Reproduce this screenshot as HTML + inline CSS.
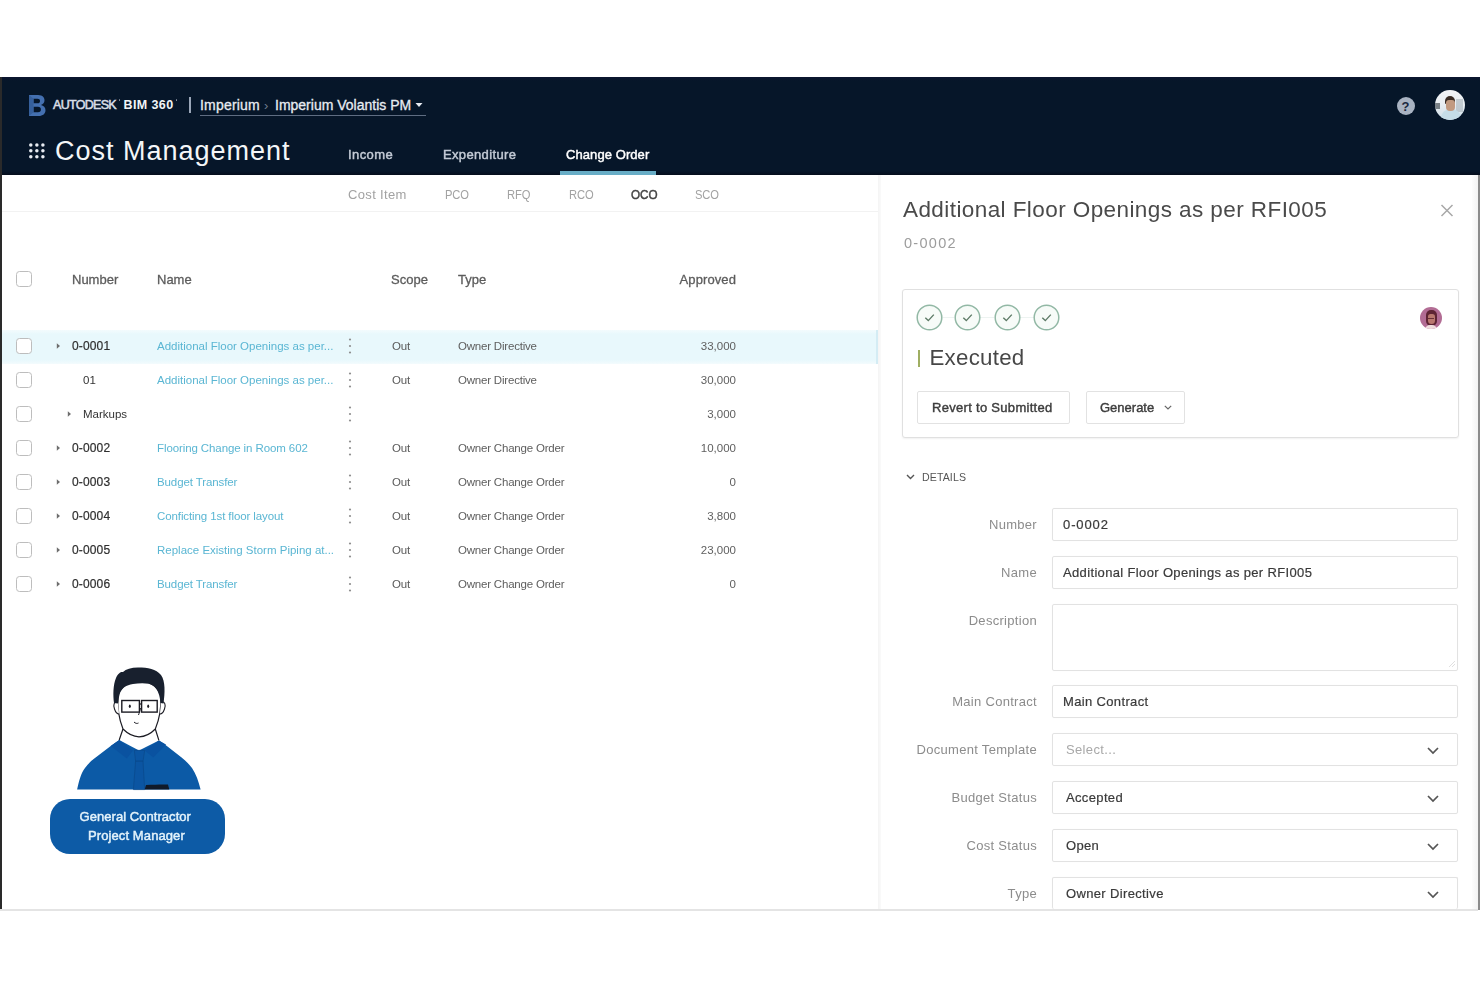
<!DOCTYPE html><html><head><meta charset="utf-8"><style>
*{box-sizing:border-box;margin:0;padding:0}
html,body{width:1480px;height:987px;overflow:hidden;background:#fff;font-family:"Liberation Sans",sans-serif}
.a{position:absolute;white-space:nowrap}
.b{position:absolute}
#wrap{position:absolute;left:0;top:0;width:1480px;height:987px;filter:blur(0.3px)}
</style></head><body><div id="wrap"><div class="b" style="left:0;top:77px;width:1480px;height:98px;background:linear-gradient(180deg,#0c1530 0%,#061629 4%,#061629 96%,#050d1c 100%)"></div>
<div class="b" style="left:0;top:77px;width:2px;height:833px;background:#2a2a2a"></div>
<div class="b" style="left:1472px;top:175px;width:6px;height:734px;background:linear-gradient(90deg,#fdfdfd,#f3f3f3)"></div>
<div class="b" style="left:1478px;top:175px;width:2px;height:735px;background:#8c8c8c"></div>
<div class="b" style="left:0;top:909px;width:1478px;height:2px;background:#e4e4e4"></div>
<svg class="b" style="left:28px;top:94px" width="18" height="23" viewBox="0 0 18 23">
<path d="M1 1 H10 C15 1 16.5 4 16.5 6.2 C16.5 8.6 15 10.3 13 11 C15.6 11.6 17.5 13.5 17.5 16.2 C17.5 19.6 15 22 10.5 22 H1 Z M5.5 4.8 V9.3 H9.5 C11.2 9.3 12 8.4 12 7 C12 5.6 11.2 4.8 9.5 4.8 Z M5.5 12.8 V18.2 H10 C12 18.2 12.9 17.2 12.9 15.5 C12.9 13.8 12 12.8 10 12.8 Z" fill="#4470b0" fill-rule="evenodd"/>
<path d="M1 1 L5.5 4.8 V18.2 L1 22 Z" fill="#36609c"/>
</svg>
<div class="a" style="left:53px;top:98.92px;font-size:12.5px;line-height:12.5px;color:#d7dde6;letter-spacing:-0.7px;-webkit-text-stroke:0.55px #d7dde6;">AUTODESK</div>
<div class="b" style="left:118.5px;top:99px;width:1.6px;height:1.6px;border-radius:1px;background:#8890a0"></div>
<div class="a" style="left:123.5px;top:98.92px;font-size:12.5px;line-height:12.5px;color:#f2f4f7;font-weight:bold;letter-spacing:0.4px;">BIM 360</div>
<div class="b" style="left:175.5px;top:99px;width:1.6px;height:1.6px;border-radius:1px;background:#8890a0"></div>
<div class="b" style="left:189px;top:97px;width:1.5px;height:16px;background:#9aa6b8"></div>
<div class="a" style="left:200px;top:98.15px;font-size:14px;line-height:14px;color:#e8ecf2;letter-spacing:0.2px;-webkit-text-stroke:0.3px #e8ecf2;">Imperium</div>
<div class="a" style="left:264px;top:98.99px;font-size:13px;line-height:13px;color:#6f7c8e;">&#8250;</div>
<div class="a" style="left:275px;top:98.15px;font-size:14px;line-height:14px;color:#e8ecf2;-webkit-text-stroke:0.3px #e8ecf2;">Imperium Volantis PM</div>
<svg class="b" style="left:415px;top:102px" width="8" height="6"><path d="M0.5 1 H7.5 L4 5 Z" fill="#e8ecf2"/></svg>
<div class="b" style="left:200px;top:114.5px;width:226px;height:1.2px;background:#5f6d82"></div>
<div class="b" style="left:1397px;top:96.5px;width:18px;height:18px;border-radius:50%;background:#a9b3c2"></div>
<div class="a" style="left:1401.5px;top:99.99px;font-size:13px;line-height:13px;color:#1b2740;font-weight:bold;">?</div>
<div class="b" style="left:1434.5px;top:90px;width:30px;height:30px;border-radius:50%;overflow:hidden;background:linear-gradient(180deg,#f2f4f6 0%,#e9eef2 45%,#cfe0ea 100%)"><div class="b" style="left:0px;top:13px;width:5px;height:6px;background:#4a5258;opacity:.7"></div><div class="b" style="left:21px;top:9px;width:7px;height:13px;background:#a9b4ba;opacity:.6"></div><div class="b" style="left:6px;top:19px;width:20px;height:14px;border-radius:9px 9px 0 0;background:#c5dde8"></div><div class="b" style="left:10.5px;top:6px;width:10px;height:8px;border-radius:5px 5px 1px 1px;background:#3a2c24"></div><div class="b" style="left:11px;top:9.5px;width:9px;height:11px;border-radius:3px 3px 4px 4px;background:#c29a80"></div></div>
<svg class="b" style="left:28px;top:142px" width="18" height="18"><circle cx="2.80" cy="2.90" r="1.75" fill="#e8ecf2"/><circle cx="2.80" cy="8.85" r="1.75" fill="#e8ecf2"/><circle cx="2.80" cy="14.80" r="1.75" fill="#e8ecf2"/><circle cx="8.85" cy="2.90" r="1.75" fill="#e8ecf2"/><circle cx="8.85" cy="8.85" r="1.75" fill="#e8ecf2"/><circle cx="8.85" cy="14.80" r="1.75" fill="#e8ecf2"/><circle cx="14.90" cy="2.90" r="1.75" fill="#e8ecf2"/><circle cx="14.90" cy="8.85" r="1.75" fill="#e8ecf2"/><circle cx="14.90" cy="14.80" r="1.75" fill="#e8ecf2"/></svg>
<div class="a" style="left:55px;top:138.14px;font-size:27px;line-height:27px;color:#f4f6f8;letter-spacing:1.0px;">Cost Management</div>
<div class="a" style="left:348px;top:147.99px;font-size:13px;line-height:13px;color:#c3cad5;letter-spacing:0.4px;-webkit-text-stroke:0.45px #c3cad5;">Income</div>
<div class="a" style="left:443px;top:147.99px;font-size:13px;line-height:13px;color:#c3cad5;letter-spacing:0.35px;-webkit-text-stroke:0.45px #c3cad5;">Expenditure</div>
<div class="a" style="left:566px;top:147.99px;font-size:13px;line-height:13px;color:#ffffff;letter-spacing:0.08px;-webkit-text-stroke:0.45px #ffffff;">Change Order</div>
<div class="b" style="left:560px;top:171px;width:96px;height:4px;background:#68adc6"></div>
<div class="a" style="left:348px;top:187.99px;font-size:13px;line-height:13px;color:#a2a2a2;letter-spacing:0.35px;">Cost Item</div>
<div class="a" style="left:445px;top:187.99px;font-size:13px;line-height:13px;color:#a2a2a2;letter-spacing:-0.1px;transform:scaleX(0.86);transform-origin:0 0;">PCO</div>
<div class="a" style="left:507px;top:187.99px;font-size:13px;line-height:13px;color:#a2a2a2;letter-spacing:-0.1px;transform:scaleX(0.86);transform-origin:0 0;">RFQ</div>
<div class="a" style="left:569px;top:187.99px;font-size:13px;line-height:13px;color:#a2a2a2;letter-spacing:-0.1px;transform:scaleX(0.86);transform-origin:0 0;">RCO</div>
<div class="a" style="left:631px;top:187.99px;font-size:13px;line-height:13px;color:#454545;transform:scaleX(0.9);transform-origin:0 0;-webkit-text-stroke:0.5px #454545;">OCO</div>
<div class="a" style="left:695px;top:187.99px;font-size:13px;line-height:13px;color:#a2a2a2;letter-spacing:-0.1px;transform:scaleX(0.86);transform-origin:0 0;">SCO</div>
<div class="b" style="left:2px;top:211px;width:876px;height:1px;background:#f2f2f2"></div>
<div class="b" style="left:16px;top:271px;width:16px;height:16px;border:1.6px solid #bdbdbd;border-radius:3.5px;background:#fff"></div>
<div class="a" style="left:72px;top:273.19px;font-size:13px;line-height:13px;color:#5c5c5c;-webkit-text-stroke:0.3px #5c5c5c;">Number</div>
<div class="a" style="left:157px;top:273.19px;font-size:13px;line-height:13px;color:#5c5c5c;-webkit-text-stroke:0.3px #5c5c5c;">Name</div>
<div class="a" style="left:391px;top:273.19px;font-size:13px;line-height:13px;color:#5c5c5c;-webkit-text-stroke:0.3px #5c5c5c;">Scope</div>
<div class="a" style="left:458px;top:273.19px;font-size:13px;line-height:13px;color:#5c5c5c;-webkit-text-stroke:0.3px #5c5c5c;">Type</div>
<div class="a" style="left:636px;width:100px;text-align:right;top:273.19px;font-size:13px;line-height:13px;color:#5c5c5c;letter-spacing:0.1px;-webkit-text-stroke:0.3px #5c5c5c;">Approved</div>
<div class="b" style="left:2px;top:330px;width:876px;height:34px;background:linear-gradient(180deg,#f3fbfd 0%,#e8f8fc 12%,#e8f8fc 88%,#f3fbfd 100%)"></div>
<div class="b" style="left:16px;top:338px;width:16px;height:16px;border:1.6px solid #bdbdbd;border-radius:3.5px;background:#fff"></div>
<svg class="b" style="left:56px;top:342px" width="5" height="8"><path d="M0.8 1.3 L4 4 L0.8 6.7 Z" fill="#6e6e6e"/></svg>
<div class="a" style="left:72px;top:340.34px;font-size:12px;line-height:12px;color:#2f2f2f;letter-spacing:0.15px;-webkit-text-stroke:0.2px #2f2f2f;">0-0001</div>
<div class="a" style="left:157px;top:340.76px;font-size:11.5px;line-height:11.5px;color:#5ab6d3;">Additional Floor Openings as per...</div>
<svg class="b" style="left:347px;top:337px" width="6" height="18"><circle cx="3" cy="2.5" r="1.1" fill="#8f8f8f"/><circle cx="3" cy="9" r="1.1" fill="#8f8f8f"/><circle cx="3" cy="15.5" r="1.1" fill="#8f8f8f"/></svg>
<div class="a" style="left:392px;top:340.76px;font-size:11.5px;line-height:11.5px;color:#5a5a5a;letter-spacing:-0.2px;">Out</div>
<div class="a" style="left:458px;top:340.76px;font-size:11.5px;line-height:11.5px;color:#5e5e5e;letter-spacing:-0.2px;">Owner Directive</div>
<div class="a" style="left:656px;width:80px;text-align:right;top:340.76px;font-size:11.5px;line-height:11.5px;color:#606060;">33,000</div>
<div class="b" style="left:16px;top:372px;width:16px;height:16px;border:1.6px solid #bdbdbd;border-radius:3.5px;background:#fff"></div>
<div class="a" style="left:83px;top:374.76px;font-size:11.5px;line-height:11.5px;color:#333;">01</div>
<div class="a" style="left:157px;top:374.76px;font-size:11.5px;line-height:11.5px;color:#5ab6d3;">Additional Floor Openings as per...</div>
<svg class="b" style="left:347px;top:371px" width="6" height="18"><circle cx="3" cy="2.5" r="1.1" fill="#8f8f8f"/><circle cx="3" cy="9" r="1.1" fill="#8f8f8f"/><circle cx="3" cy="15.5" r="1.1" fill="#8f8f8f"/></svg>
<div class="a" style="left:392px;top:374.76px;font-size:11.5px;line-height:11.5px;color:#5a5a5a;letter-spacing:-0.2px;">Out</div>
<div class="a" style="left:458px;top:374.76px;font-size:11.5px;line-height:11.5px;color:#5e5e5e;letter-spacing:-0.2px;">Owner Directive</div>
<div class="a" style="left:656px;width:80px;text-align:right;top:374.76px;font-size:11.5px;line-height:11.5px;color:#606060;">30,000</div>
<div class="b" style="left:16px;top:406px;width:16px;height:16px;border:1.6px solid #bdbdbd;border-radius:3.5px;background:#fff"></div>
<svg class="b" style="left:67px;top:410px" width="5" height="8"><path d="M0.8 1.3 L4 4 L0.8 6.7 Z" fill="#6e6e6e"/></svg>
<div class="a" style="left:83px;top:408.76px;font-size:11.5px;line-height:11.5px;color:#333;">Markups</div>
<svg class="b" style="left:347px;top:405px" width="6" height="18"><circle cx="3" cy="2.5" r="1.1" fill="#8f8f8f"/><circle cx="3" cy="9" r="1.1" fill="#8f8f8f"/><circle cx="3" cy="15.5" r="1.1" fill="#8f8f8f"/></svg>
<div class="a" style="left:656px;width:80px;text-align:right;top:408.76px;font-size:11.5px;line-height:11.5px;color:#606060;">3,000</div>
<div class="b" style="left:16px;top:440px;width:16px;height:16px;border:1.6px solid #bdbdbd;border-radius:3.5px;background:#fff"></div>
<svg class="b" style="left:56px;top:444px" width="5" height="8"><path d="M0.8 1.3 L4 4 L0.8 6.7 Z" fill="#6e6e6e"/></svg>
<div class="a" style="left:72px;top:442.34px;font-size:12px;line-height:12px;color:#2f2f2f;letter-spacing:0.15px;-webkit-text-stroke:0.2px #2f2f2f;">0-0002</div>
<div class="a" style="left:157px;top:442.76px;font-size:11.5px;line-height:11.5px;color:#5ab6d3;letter-spacing:-0.1px;">Flooring Change in Room 602</div>
<svg class="b" style="left:347px;top:439px" width="6" height="18"><circle cx="3" cy="2.5" r="1.1" fill="#8f8f8f"/><circle cx="3" cy="9" r="1.1" fill="#8f8f8f"/><circle cx="3" cy="15.5" r="1.1" fill="#8f8f8f"/></svg>
<div class="a" style="left:392px;top:442.76px;font-size:11.5px;line-height:11.5px;color:#5a5a5a;letter-spacing:-0.2px;">Out</div>
<div class="a" style="left:458px;top:442.76px;font-size:11.5px;line-height:11.5px;color:#5e5e5e;letter-spacing:-0.2px;">Owner Change Order</div>
<div class="a" style="left:656px;width:80px;text-align:right;top:442.76px;font-size:11.5px;line-height:11.5px;color:#606060;">10,000</div>
<div class="b" style="left:16px;top:474px;width:16px;height:16px;border:1.6px solid #bdbdbd;border-radius:3.5px;background:#fff"></div>
<svg class="b" style="left:56px;top:478px" width="5" height="8"><path d="M0.8 1.3 L4 4 L0.8 6.7 Z" fill="#6e6e6e"/></svg>
<div class="a" style="left:72px;top:476.34px;font-size:12px;line-height:12px;color:#2f2f2f;letter-spacing:0.15px;-webkit-text-stroke:0.2px #2f2f2f;">0-0003</div>
<div class="a" style="left:157px;top:476.76px;font-size:11.5px;line-height:11.5px;color:#5ab6d3;letter-spacing:-0.1px;">Budget Transfer</div>
<svg class="b" style="left:347px;top:473px" width="6" height="18"><circle cx="3" cy="2.5" r="1.1" fill="#8f8f8f"/><circle cx="3" cy="9" r="1.1" fill="#8f8f8f"/><circle cx="3" cy="15.5" r="1.1" fill="#8f8f8f"/></svg>
<div class="a" style="left:392px;top:476.76px;font-size:11.5px;line-height:11.5px;color:#5a5a5a;letter-spacing:-0.2px;">Out</div>
<div class="a" style="left:458px;top:476.76px;font-size:11.5px;line-height:11.5px;color:#5e5e5e;letter-spacing:-0.2px;">Owner Change Order</div>
<div class="a" style="left:656px;width:80px;text-align:right;top:476.76px;font-size:11.5px;line-height:11.5px;color:#606060;">0</div>
<div class="b" style="left:16px;top:508px;width:16px;height:16px;border:1.6px solid #bdbdbd;border-radius:3.5px;background:#fff"></div>
<svg class="b" style="left:56px;top:512px" width="5" height="8"><path d="M0.8 1.3 L4 4 L0.8 6.7 Z" fill="#6e6e6e"/></svg>
<div class="a" style="left:72px;top:510.34px;font-size:12px;line-height:12px;color:#2f2f2f;letter-spacing:0.15px;-webkit-text-stroke:0.2px #2f2f2f;">0-0004</div>
<div class="a" style="left:157px;top:510.76px;font-size:11.5px;line-height:11.5px;color:#5ab6d3;letter-spacing:-0.1px;">Conficting 1st floor layout</div>
<svg class="b" style="left:347px;top:507px" width="6" height="18"><circle cx="3" cy="2.5" r="1.1" fill="#8f8f8f"/><circle cx="3" cy="9" r="1.1" fill="#8f8f8f"/><circle cx="3" cy="15.5" r="1.1" fill="#8f8f8f"/></svg>
<div class="a" style="left:392px;top:510.76px;font-size:11.5px;line-height:11.5px;color:#5a5a5a;letter-spacing:-0.2px;">Out</div>
<div class="a" style="left:458px;top:510.76px;font-size:11.5px;line-height:11.5px;color:#5e5e5e;letter-spacing:-0.2px;">Owner Change Order</div>
<div class="a" style="left:656px;width:80px;text-align:right;top:510.76px;font-size:11.5px;line-height:11.5px;color:#606060;">3,800</div>
<div class="b" style="left:16px;top:542px;width:16px;height:16px;border:1.6px solid #bdbdbd;border-radius:3.5px;background:#fff"></div>
<svg class="b" style="left:56px;top:546px" width="5" height="8"><path d="M0.8 1.3 L4 4 L0.8 6.7 Z" fill="#6e6e6e"/></svg>
<div class="a" style="left:72px;top:544.34px;font-size:12px;line-height:12px;color:#2f2f2f;letter-spacing:0.15px;-webkit-text-stroke:0.2px #2f2f2f;">0-0005</div>
<div class="a" style="left:157px;top:544.76px;font-size:11.5px;line-height:11.5px;color:#5ab6d3;">Replace Existing Storm Piping at...</div>
<svg class="b" style="left:347px;top:541px" width="6" height="18"><circle cx="3" cy="2.5" r="1.1" fill="#8f8f8f"/><circle cx="3" cy="9" r="1.1" fill="#8f8f8f"/><circle cx="3" cy="15.5" r="1.1" fill="#8f8f8f"/></svg>
<div class="a" style="left:392px;top:544.76px;font-size:11.5px;line-height:11.5px;color:#5a5a5a;letter-spacing:-0.2px;">Out</div>
<div class="a" style="left:458px;top:544.76px;font-size:11.5px;line-height:11.5px;color:#5e5e5e;letter-spacing:-0.2px;">Owner Change Order</div>
<div class="a" style="left:656px;width:80px;text-align:right;top:544.76px;font-size:11.5px;line-height:11.5px;color:#606060;">23,000</div>
<div class="b" style="left:16px;top:576px;width:16px;height:16px;border:1.6px solid #bdbdbd;border-radius:3.5px;background:#fff"></div>
<svg class="b" style="left:56px;top:580px" width="5" height="8"><path d="M0.8 1.3 L4 4 L0.8 6.7 Z" fill="#6e6e6e"/></svg>
<div class="a" style="left:72px;top:578.34px;font-size:12px;line-height:12px;color:#2f2f2f;letter-spacing:0.15px;-webkit-text-stroke:0.2px #2f2f2f;">0-0006</div>
<div class="a" style="left:157px;top:578.76px;font-size:11.5px;line-height:11.5px;color:#5ab6d3;letter-spacing:-0.1px;">Budget Transfer</div>
<svg class="b" style="left:347px;top:575px" width="6" height="18"><circle cx="3" cy="2.5" r="1.1" fill="#8f8f8f"/><circle cx="3" cy="9" r="1.1" fill="#8f8f8f"/><circle cx="3" cy="15.5" r="1.1" fill="#8f8f8f"/></svg>
<div class="a" style="left:392px;top:578.76px;font-size:11.5px;line-height:11.5px;color:#5a5a5a;letter-spacing:-0.2px;">Out</div>
<div class="a" style="left:458px;top:578.76px;font-size:11.5px;line-height:11.5px;color:#5e5e5e;letter-spacing:-0.2px;">Owner Change Order</div>
<div class="a" style="left:656px;width:80px;text-align:right;top:578.76px;font-size:11.5px;line-height:11.5px;color:#606060;">0</div>
<div class="b" style="left:876px;top:330px;width:2px;height:34px;background:#d4ecf4"></div>
<div class="b" style="left:878px;top:175px;width:3px;height:734px;background:linear-gradient(90deg,#f4f4f4,#fafafa)"></div>
<div class="a" style="left:903px;top:198.95px;font-size:22.5px;line-height:22.5px;color:#4a4a4a;letter-spacing:0.42px;">Additional Floor Openings as per RFI005</div>
<svg class="b" style="left:1440px;top:204px" width="14" height="13"><path d="M1.5 1 L12.5 12 M12.5 1 L1.5 12" stroke="#a8a8a8" stroke-width="1.5"/></svg>
<div class="a" style="left:904px;top:235.72px;font-size:14.5px;line-height:14.5px;color:#9d9d9d;letter-spacing:1.3px;">0-0002</div>
<div class="b" style="left:901.5px;top:289.2px;width:557px;height:148.5px;border:1.8px solid #e0e0e0;border-radius:3px;background:#fff;box-shadow:0 1px 2px rgba(0,0,0,.06)"></div>
<div class="b" style="left:942.5px;top:317px;width:11.5px;height:1px;background:#edf3f1"></div>
<svg class="b" style="left:916.0px;top:303.5px" width="27" height="27" viewBox="0 0 27 27"><circle cx="13.5" cy="13.5" r="12.3" fill="#f7fbf8" stroke="#92b8a5" stroke-width="1.5"/><path d="M9.3 13.8 L12.3 16.6 L17.8 10.6" fill="none" stroke="#5d7a66" stroke-width="1.4"/></svg>
<div class="b" style="left:980px;top:317px;width:14px;height:1px;background:#edf3f1"></div>
<svg class="b" style="left:953.5px;top:303.5px" width="27" height="27" viewBox="0 0 27 27"><circle cx="13.5" cy="13.5" r="12.3" fill="#f7fbf8" stroke="#92b8a5" stroke-width="1.5"/><path d="M9.3 13.8 L12.3 16.6 L17.8 10.6" fill="none" stroke="#5d7a66" stroke-width="1.4"/></svg>
<div class="b" style="left:1020px;top:317px;width:13.5px;height:1px;background:#edf3f1"></div>
<svg class="b" style="left:993.5px;top:303.5px" width="27" height="27" viewBox="0 0 27 27"><circle cx="13.5" cy="13.5" r="12.3" fill="#f7fbf8" stroke="#92b8a5" stroke-width="1.5"/><path d="M9.3 13.8 L12.3 16.6 L17.8 10.6" fill="none" stroke="#5d7a66" stroke-width="1.4"/></svg>
<svg class="b" style="left:1033.0px;top:303.5px" width="27" height="27" viewBox="0 0 27 27"><circle cx="13.5" cy="13.5" r="12.3" fill="#f7fbf8" stroke="#92b8a5" stroke-width="1.5"/><path d="M9.3 13.8 L12.3 16.6 L17.8 10.6" fill="none" stroke="#5d7a66" stroke-width="1.4"/></svg>
<div class="b" style="left:1420px;top:306.5px;width:22px;height:22px;border-radius:50%;overflow:hidden;background:#b26c94"><div class="b" style="left:5.5px;top:3.5px;width:11px;height:16px;border-radius:5px 5px 5px 5px;background:#5e2434"></div><div class="b" style="left:7.5px;top:7px;width:7px;height:10px;border-radius:3px 3px 4px 4px;background:#b9786f"></div><div class="b" style="left:8px;top:11px;width:6px;height:1.3px;background:#6a3038"></div><div class="b" style="left:5px;top:18.5px;width:12px;height:8px;border-radius:5px 5px 0 0;background:#f0dede"></div></div>
<div class="b" style="left:917.7px;top:349.7px;width:2.7px;height:17.6px;background:#9fae62"></div>
<div class="a" style="left:929.5px;top:346.72px;font-size:22.3px;line-height:22.3px;color:#474747;letter-spacing:0.25px;">Executed</div>
<div class="b" style="left:917px;top:391px;width:153px;height:33px;border:1.5px solid #e2e2e2;border-radius:2px;background:#fff"></div>
<div class="a" style="left:932px;top:401.49px;font-size:13px;line-height:13px;color:#3c3c3c;letter-spacing:0.3px;-webkit-text-stroke:0.4px #3c3c3c;">Revert to Submitted</div>
<div class="b" style="left:1085.5px;top:391px;width:99px;height:33px;border:1.5px solid #e2e2e2;border-radius:2px;background:#fff"></div>
<div class="a" style="left:1100px;top:401.49px;font-size:13px;line-height:13px;color:#3c3c3c;-webkit-text-stroke:0.4px #3c3c3c;">Generate</div>
<svg class="b" style="left:1164px;top:405px" width="8" height="5"><path d="M0.8 0.8 L4 4 L7.2 0.8" fill="none" stroke="#666" stroke-width="1.2"/></svg>
<svg class="b" style="left:906px;top:474px" width="9" height="6"><path d="M1 1 L4.5 4.5 L8 1" fill="none" stroke="#555" stroke-width="1.4"/></svg>
<div class="a" style="left:922px;top:471.52px;font-size:10.6px;line-height:10.6px;color:#555;letter-spacing:0.1px;">DETAILS</div>
<div class="a" style="left:837px;width:200px;text-align:right;top:518.49px;font-size:13px;line-height:13px;color:#8c8c8c;letter-spacing:0.3px;">Number</div>
<div class="b" style="left:1052px;top:508.3px;width:406px;height:32.7px;border:1.7px solid #e2e2e2;border-radius:2px;background:#fff;box-shadow:0 0 1px rgba(0,0,0,.05)"></div>
<div class="a" style="left:1063px;top:518.49px;font-size:13px;line-height:13px;color:#3a3a3a;letter-spacing:0.9px;-webkit-text-stroke:0.2px #3a3a3a;">0-0002</div>
<div class="a" style="left:837px;width:200px;text-align:right;top:566.49px;font-size:13px;line-height:13px;color:#8c8c8c;letter-spacing:0.3px;">Name</div>
<div class="b" style="left:1052px;top:556.3px;width:406px;height:32.7px;border:1.7px solid #e2e2e2;border-radius:2px;background:#fff;box-shadow:0 0 1px rgba(0,0,0,.05)"></div>
<div class="a" style="left:1063px;top:566.49px;font-size:13px;line-height:13px;color:#3a3a3a;letter-spacing:0.35px;-webkit-text-stroke:0.2px #3a3a3a;">Additional Floor Openings as per RFI005</div>
<div class="a" style="left:837px;width:200px;text-align:right;top:614.49px;font-size:13px;line-height:13px;color:#8c8c8c;letter-spacing:0.3px;">Description</div>
<div class="b" style="left:1052px;top:604.3px;width:406px;height:66.7px;border:1.7px solid #e2e2e2;border-radius:2px;background:#fff;box-shadow:0 0 1px rgba(0,0,0,.05)"></div>
<div class="a" style="left:837px;width:200px;text-align:right;top:695.49px;font-size:13px;line-height:13px;color:#8c8c8c;letter-spacing:0.3px;">Main Contract</div>
<div class="b" style="left:1052px;top:685.3px;width:406px;height:32.7px;border:1.7px solid #e2e2e2;border-radius:2px;background:#fff;box-shadow:0 0 1px rgba(0,0,0,.05)"></div>
<div class="a" style="left:1063px;top:695.49px;font-size:13px;line-height:13px;color:#3a3a3a;letter-spacing:0.35px;-webkit-text-stroke:0.2px #3a3a3a;">Main Contract</div>
<div class="a" style="left:837px;width:200px;text-align:right;top:743.49px;font-size:13px;line-height:13px;color:#8c8c8c;letter-spacing:0.3px;">Document Template</div>
<div class="b" style="left:1052px;top:733.3px;width:406px;height:32.7px;border:1.7px solid #e2e2e2;border-radius:2px;background:#fff;box-shadow:0 0 1px rgba(0,0,0,.05)"></div>
<div class="a" style="left:1066px;top:743.49px;font-size:13px;line-height:13px;color:#a8a8a8;letter-spacing:0.35px;">Select...</div>
<svg class="b" style="left:1427px;top:746.5px" width="12" height="8"><path d="M1 1 L6 6 L11 1" fill="none" stroke="#555" stroke-width="1.7"/></svg>
<div class="a" style="left:837px;width:200px;text-align:right;top:791.49px;font-size:13px;line-height:13px;color:#8c8c8c;letter-spacing:0.3px;">Budget Status</div>
<div class="b" style="left:1052px;top:781.3px;width:406px;height:32.7px;border:1.7px solid #e2e2e2;border-radius:2px;background:#fff;box-shadow:0 0 1px rgba(0,0,0,.05)"></div>
<div class="a" style="left:1066px;top:791.49px;font-size:13px;line-height:13px;color:#3a3a3a;letter-spacing:0.35px;-webkit-text-stroke:0.2px #3a3a3a;">Accepted</div>
<svg class="b" style="left:1427px;top:794.5px" width="12" height="8"><path d="M1 1 L6 6 L11 1" fill="none" stroke="#555" stroke-width="1.7"/></svg>
<div class="a" style="left:837px;width:200px;text-align:right;top:839.49px;font-size:13px;line-height:13px;color:#8c8c8c;letter-spacing:0.3px;">Cost Status</div>
<div class="b" style="left:1052px;top:829.3px;width:406px;height:32.7px;border:1.7px solid #e2e2e2;border-radius:2px;background:#fff;box-shadow:0 0 1px rgba(0,0,0,.05)"></div>
<div class="a" style="left:1066px;top:839.49px;font-size:13px;line-height:13px;color:#3a3a3a;letter-spacing:0.35px;-webkit-text-stroke:0.2px #3a3a3a;">Open</div>
<svg class="b" style="left:1427px;top:842.5px" width="12" height="8"><path d="M1 1 L6 6 L11 1" fill="none" stroke="#555" stroke-width="1.7"/></svg>
<div class="a" style="left:837px;width:200px;text-align:right;top:887.49px;font-size:13px;line-height:13px;color:#8c8c8c;letter-spacing:0.3px;">Type</div>
<div class="b" style="left:1052px;top:877.3px;width:406px;height:31.7px;border:1.7px solid #e2e2e2;border-bottom:none;border-radius:2px;background:#fff;box-shadow:0 0 1px rgba(0,0,0,.05)"></div>
<div class="a" style="left:1066px;top:887.49px;font-size:13px;line-height:13px;color:#3a3a3a;letter-spacing:0.35px;-webkit-text-stroke:0.2px #3a3a3a;">Owner Directive</div>
<svg class="b" style="left:1427px;top:890.5px" width="12" height="8"><path d="M1 1 L6 6 L11 1" fill="none" stroke="#555" stroke-width="1.7"/></svg>
<svg class="b" style="left:1448px;top:660px" width="8" height="8"><path d="M7 1 L1 7 M7 4 L4 7" stroke="#e0e0e0" stroke-width="1"/></svg>
<svg class="b" style="left:60px;top:655px" width="160" height="140" viewBox="0 0 160 140">
<path d="M17.1 134.6 C19 126 21 118 25 113 C28 109 31 106 34 103.8 L50.7 91.1 L59.2 84.9 L98.9 85.4 L104.6 89.2 L121.6 102.4 C125 105 129 109 132 113 C136 119 138.5 126 140.6 134.6 Z" fill="#0c5aa6"/>
<path d="M59.2 84.9 L79 95.5 L98.9 85.4 L95.5 75 L63 75 Z" fill="#ffffff"/>
<path d="M50.7 91.1 L59.2 84.9 L73 95.5 L66.8 103.4 Z" fill="#0a52a0"/>
<path d="M106 89.5 L98.9 85.4 L84.7 95.5 L93.3 102.4 Z" fill="#0a52a0"/>
<path d="M74.3 95.3 L84.7 95.3 L83 106.2 L75.6 106.2 Z" fill="#0b55a2" stroke="#0a4787" stroke-width="0.6"/>
<path d="M75.6 106.2 L83 106.2 L84.7 134.6 L73.4 134.6 Z" fill="#0b55a2" stroke="#0a4787" stroke-width="0.6"/>
<path d="M84.7 134.6 L86 130 C95 129.5 103 129.2 108 129.5 L109.3 134.6 Z" fill="#101a2a"/>
<path d="M63 74 L59.2 85 M95.3 74 L98.9 85.4" stroke="#1c1c24" stroke-width="1.2" fill="none"/>
<path d="M58 40 C57 55 59 64 63 74 C68 79 73 81.6 79 81.8 C85.5 81.6 90.5 79 95.3 74 C99.5 64 101.5 55 101 40 C96 30 88 26 79.5 26 C70 26 62 30 58 40 Z" fill="#ffffff" stroke="#1c1c24" stroke-width="1.2"/>
<path d="M58 47 C54 46 53 50 54.5 54 C55.5 57 57 59 59 59" fill="#fff" stroke="#1c1c24" stroke-width="1.1"/>
<path d="M101 47 C105 46 106 50 104.5 54 C103.5 57 102 59 100 59" fill="#fff" stroke="#1c1c24" stroke-width="1.1"/>
<path d="M54 48 C53 40 53 30 56 23 C58 18 61 16.5 63 17 C66 14 71 12.5 78 12.5 C88 12.5 96 14 101 20 C105.5 26 105 38 103.5 48.5 L100.5 48 C100 41 98 35 94 31 C89 27.5 80 28 73 29 C66 30 62 33 60 38 C59 41 58.5 45 58 48.5 Z" fill="#18202e"/>
<rect x="61.8" y="45.5" width="17.6" height="11.6" fill="none" stroke="#1c1c24" stroke-width="1.4"/>
<rect x="81.6" y="45.5" width="15.6" height="11.6" fill="none" stroke="#1c1c24" stroke-width="1.4"/>
<path d="M79.4 49 L81.6 49" stroke="#1c1c24" stroke-width="1.2"/>
<ellipse cx="69.8" cy="51.3" rx="1" ry="1.8" fill="#1c1c24"/>
<ellipse cx="88.2" cy="51.3" rx="1" ry="1.8" fill="#1c1c24"/>
<path d="M80.5 53 C80 56 79 58.5 78.5 60" stroke="#1c1c24" stroke-width="1" fill="none"/>
<path d="M74 67 C75.5 68.5 77 68.8 78.5 68" stroke="#1c1c24" stroke-width="1" fill="none"/>
</svg>
<div class="b" style="left:50px;top:798.5px;width:174.5px;height:55px;border-radius:20px;background:#0d5ba6"></div>
<div class="a" style="left:79.5px;top:810.49px;font-size:13px;line-height:13px;color:#e4f3fb;letter-spacing:0.05px;-webkit-text-stroke:0.45px #e4f3fb;">General Contractor</div>
<div class="a" style="left:88px;top:828.99px;font-size:13px;line-height:13px;color:#e4f3fb;letter-spacing:0.1px;-webkit-text-stroke:0.45px #e4f3fb;">Project Manager</div></div></body></html>
